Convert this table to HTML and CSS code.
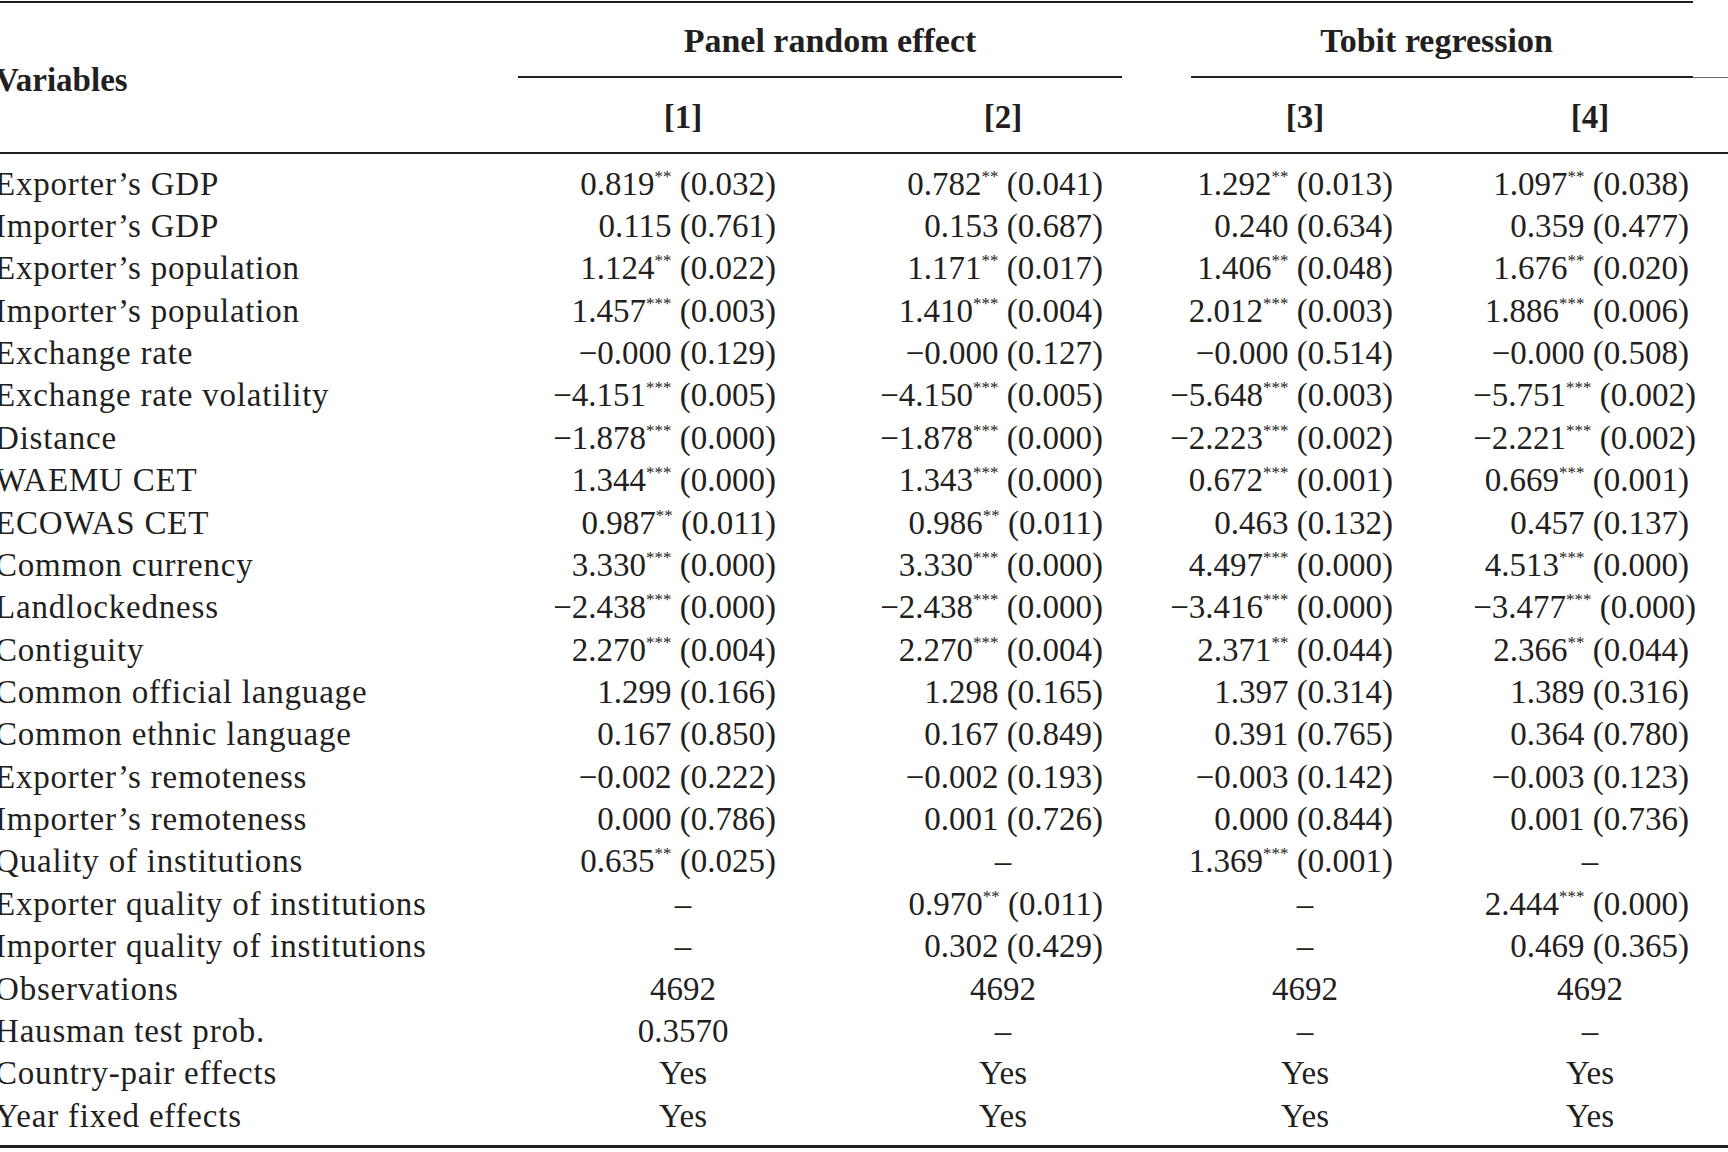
FILE: index.html
```html
<!DOCTYPE html>
<html lang="en">
<head>
<meta charset="utf-8">
<title>Regression results</title>
<link rel="stylesheet" href="styles.css">
</head>
<body>
<div class="sheet">
  <div class="rule-top"></div>
  <div class="head">
    <div class="var-head">Variables</div>
    <div class="group panel">
      <div class="group-title">Panel random effect</div>
      <div class="group-rule"><div class="thick"></div></div>
    </div>
    <div class="group tobit">
      <div class="group-title">Tobit regression</div>
      <div class="group-rule"><div class="thick"></div><div class="thin"></div></div>
    </div>
    <div class="colnum">[1]</div>
    <div class="colnum">[2]</div>
    <div class="colnum">[3]</div>
    <div class="colnum">[4]</div>
  </div>
  <div class="rule-mid"></div>
  <div class="tbody">
    <div class="row"><div class="label">Exporter’s GDP</div><div class="num c1">0.819<span class="sig">**</span> (0.032)</div><div class="num c2">0.782<span class="sig">**</span> (0.041)</div><div class="num c3">1.292<span class="sig">**</span> (0.013)</div><div class="num c4">1.097<span class="sig">**</span> (0.038)</div></div>
    <div class="row"><div class="label">Importer’s GDP</div><div class="num c1">0.115 (0.761)</div><div class="num c2">0.153 (0.687)</div><div class="num c3">0.240 (0.634)</div><div class="num c4">0.359 (0.477)</div></div>
    <div class="row"><div class="label">Exporter’s population</div><div class="num c1">1.124<span class="sig">**</span> (0.022)</div><div class="num c2">1.171<span class="sig">**</span> (0.017)</div><div class="num c3">1.406<span class="sig">**</span> (0.048)</div><div class="num c4">1.676<span class="sig">**</span> (0.020)</div></div>
    <div class="row"><div class="label">Importer’s population</div><div class="num c1">1.457<span class="sig">***</span> (0.003)</div><div class="num c2">1.410<span class="sig">***</span> (0.004)</div><div class="num c3">2.012<span class="sig">***</span> (0.003)</div><div class="num c4">1.886<span class="sig">***</span> (0.006)</div></div>
    <div class="row"><div class="label">Exchange rate</div><div class="num c1">−0.000 (0.129)</div><div class="num c2">−0.000 (0.127)</div><div class="num c3">−0.000 (0.514)</div><div class="num c4">−0.000 (0.508)</div></div>
    <div class="row"><div class="label">Exchange rate volatility</div><div class="num c1">−4.151<span class="sig">***</span> (0.005)</div><div class="num c2">−4.150<span class="sig">***</span> (0.005)</div><div class="num c3">−5.648<span class="sig">***</span> (0.003)</div><div class="num c4 wide">−5.751<span class="sig">***</span> (0.002)</div></div>
    <div class="row"><div class="label">Distance</div><div class="num c1">−1.878<span class="sig">***</span> (0.000)</div><div class="num c2">−1.878<span class="sig">***</span> (0.000)</div><div class="num c3">−2.223<span class="sig">***</span> (0.002)</div><div class="num c4 wide">−2.221<span class="sig">***</span> (0.002)</div></div>
    <div class="row"><div class="label">WAEMU CET</div><div class="num c1">1.344<span class="sig">***</span> (0.000)</div><div class="num c2">1.343<span class="sig">***</span> (0.000)</div><div class="num c3">0.672<span class="sig">***</span> (0.001)</div><div class="num c4">0.669<span class="sig">***</span> (0.001)</div></div>
    <div class="row"><div class="label">ECOWAS CET</div><div class="num c1">0.987<span class="sig">**</span> (0.011)</div><div class="num c2">0.986<span class="sig">**</span> (0.011)</div><div class="num c3">0.463 (0.132)</div><div class="num c4">0.457 (0.137)</div></div>
    <div class="row"><div class="label">Common currency</div><div class="num c1">3.330<span class="sig">***</span> (0.000)</div><div class="num c2">3.330<span class="sig">***</span> (0.000)</div><div class="num c3">4.497<span class="sig">***</span> (0.000)</div><div class="num c4">4.513<span class="sig">***</span> (0.000)</div></div>
    <div class="row"><div class="label">Landlockedness</div><div class="num c1">−2.438<span class="sig">***</span> (0.000)</div><div class="num c2">−2.438<span class="sig">***</span> (0.000)</div><div class="num c3">−3.416<span class="sig">***</span> (0.000)</div><div class="num c4 wide">−3.477<span class="sig">***</span> (0.000)</div></div>
    <div class="row"><div class="label">Contiguity</div><div class="num c1">2.270<span class="sig">***</span> (0.004)</div><div class="num c2">2.270<span class="sig">***</span> (0.004)</div><div class="num c3">2.371<span class="sig">**</span> (0.044)</div><div class="num c4">2.366<span class="sig">**</span> (0.044)</div></div>
    <div class="row"><div class="label">Common official language</div><div class="num c1">1.299 (0.166)</div><div class="num c2">1.298 (0.165)</div><div class="num c3">1.397 (0.314)</div><div class="num c4">1.389 (0.316)</div></div>
    <div class="row"><div class="label">Common ethnic language</div><div class="num c1">0.167 (0.850)</div><div class="num c2">0.167 (0.849)</div><div class="num c3">0.391 (0.765)</div><div class="num c4">0.364 (0.780)</div></div>
    <div class="row"><div class="label">Exporter’s remoteness</div><div class="num c1">−0.002 (0.222)</div><div class="num c2">−0.002 (0.193)</div><div class="num c3">−0.003 (0.142)</div><div class="num c4">−0.003 (0.123)</div></div>
    <div class="row"><div class="label">Importer’s remoteness</div><div class="num c1">0.000 (0.786)</div><div class="num c2">0.001 (0.726)</div><div class="num c3">0.000 (0.844)</div><div class="num c4">0.001 (0.736)</div></div>
    <div class="row"><div class="label">Quality of institutions</div><div class="num c1">0.635<span class="sig">**</span> (0.025)</div><div class="ctr">–</div><div class="num c3">1.369<span class="sig">***</span> (0.001)</div><div class="ctr">–</div></div>
    <div class="row"><div class="label">Exporter quality of institutions</div><div class="ctr">–</div><div class="num c2">0.970<span class="sig">**</span> (0.011)</div><div class="ctr">–</div><div class="num c4">2.444<span class="sig">***</span> (0.000)</div></div>
    <div class="row"><div class="label">Importer quality of institutions</div><div class="ctr">–</div><div class="num c2">0.302 (0.429)</div><div class="ctr">–</div><div class="num c4">0.469 (0.365)</div></div>
    <div class="row"><div class="label">Observations</div><div class="ctr">4692</div><div class="ctr">4692</div><div class="ctr">4692</div><div class="ctr">4692</div></div>
    <div class="row"><div class="label">Hausman test prob.</div><div class="ctr">0.3570</div><div class="ctr">–</div><div class="ctr">–</div><div class="ctr">–</div></div>
    <div class="row"><div class="label">Country-pair effects</div><div class="ctr">Yes</div><div class="ctr">Yes</div><div class="ctr">Yes</div><div class="ctr">Yes</div></div>
    <div class="row"><div class="label">Year fixed effects</div><div class="ctr">Yes</div><div class="ctr">Yes</div><div class="ctr">Yes</div><div class="ctr">Yes</div></div>
  </div>
  <div class="rule-bottom"></div>
</div>
</body>
</html>
```

FILE: styles.css
```css
html, body {
  margin: 0;
  padding: 0;
  background: #ffffff;
}

body {
  width: 1728px;
  height: 1152px;
  overflow: hidden;
  color: #231f20;
  font-family: "Liberation Serif", "Times New Roman", serif;
}

.sheet {
  width: 1733px;
  margin-left: -5px;
  padding-top: 1px;
}

.rule-top {
  width: 1698px;
  height: 2px;
  background: #231f20;
}

.head {
  display: grid;
  grid-template-columns: 523px 330px 310px 294px 276px;
  grid-template-rows: 75px 74px;
}

.var-head {
  grid-row: 1 / 3;
  grid-column: 1;
  font-weight: bold;
  font-size: 33px;
  line-height: 40px;
  padding-top: 57px;
}

.group {
  grid-column: span 2;
  padding-top: 17.5px;
}

.group-title {
  font-weight: bold;
  font-size: 34px;
  line-height: 40px;
  text-align: center;
  white-space: nowrap;
}

.group-rule {
  display: flex;
  align-items: center;
  height: 2px;
  margin-top: 15.5px;
}

.group-rule .thick {
  flex: 1;
  height: 2px;
  background: #231f20;
}

.group-rule .thin {
  width: 35px;
  height: 1px;
  background: #6d6a6b;
}

.panel .group-title {
  padding-left: 20px;
  margin-right: 36px;
}

.panel .group-rule {
  margin-right: 36px;
}

.tobit .group-title {
  margin-left: 33px;
  margin-right: 46px;
}

.tobit .group-rule {
  margin-left: 33px;
}

.colnum {
  font-weight: bold;
  font-size: 33px;
  line-height: 40px;
  text-align: center;
  padding-top: 19px;
}

.rule-mid {
  height: 2px;
  background: #231f20;
}

.tbody {
  padding-top: 8.7px;
  padding-bottom: 8px;
}

.row {
  display: grid;
  grid-template-columns: 523px 330px 310px 294px 276px;
  height: 42.37px;
  font-size: 33px;
  line-height: 42.37px;
  white-space: nowrap;
}

.label {
  letter-spacing: 0.8px;
}

.num {
  text-align: right;
}

.c1 { padding-right: 72px; }
.c2 { padding-right: 55px; }
.c3 { padding-right: 59px; }
.c4 { padding-right: 39px; }
.c4.wide { padding-right: 32px; }

.ctr {
  text-align: center;
}

.sig {
  font-size: 17px;
  line-height: 0;
  vertical-align: 13px;
}

.rule-bottom {
  height: 3px;
  background: #231f20;
}
```
